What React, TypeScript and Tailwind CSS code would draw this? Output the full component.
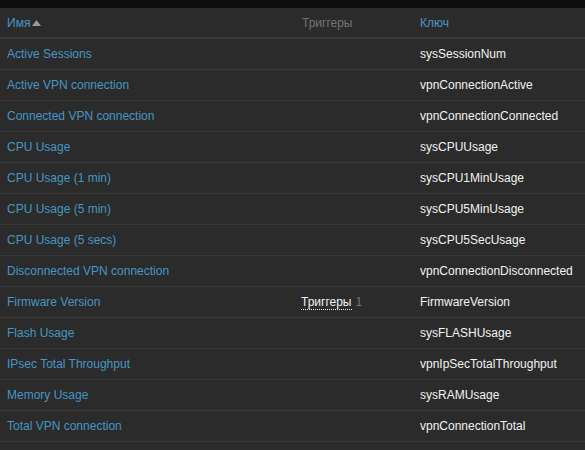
import React from "react";

const rows: { name: string; key: string; triggers?: number }[] = [
  { name: "Active Sessions", key: "sysSessionNum" },
  { name: "Active VPN connection", key: "vpnConnectionActive" },
  { name: "Connected VPN connection", key: "vpnConnectionConnected" },
  { name: "CPU Usage", key: "sysCPUUsage" },
  { name: "CPU Usage (1 min)", key: "sysCPU1MinUsage" },
  { name: "CPU Usage (5 min)", key: "sysCPU5MinUsage" },
  { name: "CPU Usage (5 secs)", key: "sysCPU5SecUsage" },
  { name: "Disconnected VPN connection", key: "vpnConnectionDisconnected" },
  { name: "Firmware Version", key: "FirmwareVersion", triggers: 1 },
  { name: "Flash Usage", key: "sysFLASHUsage" },
  { name: "IPsec Total Throughput", key: "vpnIpSecTotalThroughput" },
  { name: "Memory Usage", key: "sysRAMUsage" },
  { name: "Total VPN connection", key: "vpnConnectionTotal" },
];

export default function App() {
  return (
    <div
      className="w-[585px] h-[450px] bg-[#2b2b2b] text-[12px] overflow-hidden"
      style={{ fontFamily: '"Liberation Sans", Arial, sans-serif' }}
    >
      <div className="h-[8px] bg-[#0e0e0e]" />
      <div className="grid grid-cols-[295px_118px_1fr] h-[31px] border-b-2 border-[#383838] items-center">
        <div className="pl-[7px] text-[#4796c4] flex items-center">
          Имя
          <svg width="9" height="6" viewBox="0 0 9 6" className="ml-[2px] mt-[1px]">
            <path d="M0 6 L4.5 0 L9 6 Z" fill="#9a9a9a" />
          </svg>
        </div>
        <div className="pl-[7px] text-[#737373]">Триггеры</div>
        <div className="pl-[7px] text-[#4796c4]">Ключ</div>
      </div>
      {rows.map((r) => (
        <div
          key={r.key}
          className="grid grid-cols-[295px_118px_1fr] h-[31px] border-b border-[#383838] items-center"
        >
          <div className="pl-[7px] text-[#4796c4]">{r.name}</div>
          <div className="pl-[6px]">
            {r.triggers ? (
              <span>
                <span className="text-[#f2f2f2] border-b border-dotted border-[#f2f2f2]">Триггеры</span>
                <span className="text-[#737373] ml-[4px]">{r.triggers}</span>
              </span>
            ) : null}
          </div>
          <div className="pl-[7px] text-[#f2f2f2]">{r.key}</div>
        </div>
      ))}
    </div>
  );
}
